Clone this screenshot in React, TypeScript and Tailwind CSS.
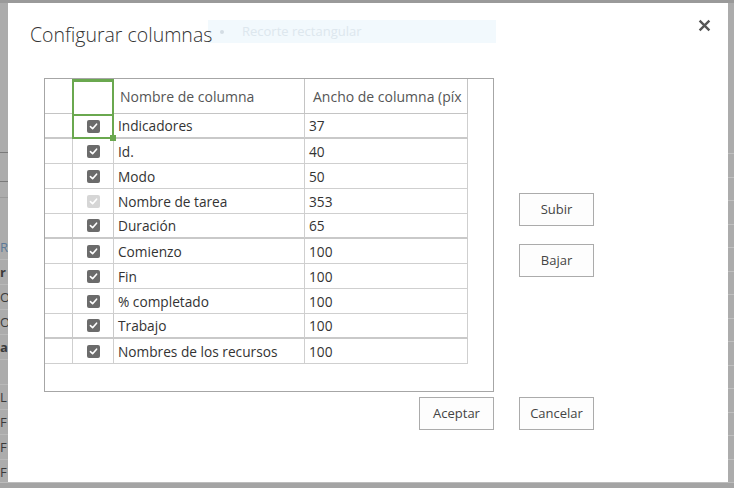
import React from "react";

type Row = { name: string; width: number; locked?: boolean; sep?: boolean };

const ROWS: Row[] = [
  { name: "Indicadores", width: 37, sep: true },
  { name: "Id.", width: 40 },
  { name: "Modo", width: 50 },
  { name: "Nombre de tarea", width: 353, locked: true },
  { name: "Duración", width: 65, sep: true },
  { name: "Comienzo", width: 100 },
  { name: "Fin", width: 100 },
  { name: "% completado", width: 100 },
  { name: "Trabajo", width: 100, sep: true },
  { name: "Nombres de los recursos", width: 100 },
];

const LEFT_STRIP = ["R", "r", "O", "O", "a", "", "L", "F", "F", "F"];

function Check({ locked }: { locked?: boolean }) {
  return (
    <span
      className={
        "flex h-[13px] w-[13px] items-center justify-center rounded-[2px] " +
        (locked ? "bg-[#d6d6d6]" : "bg-[#6b6b6b]")
      }
    >
      <svg width="9" height="9" viewBox="0 0 10 10" fill="none">
        <path d="M1.6 5.2 L4 7.5 L8.4 2.4" stroke="white" strokeWidth="1.8" strokeLinecap="round" strokeLinejoin="round" />
      </svg>
    </span>
  );
}

function Button({ label }: { label: string }) {
  return (
    <button className="flex h-[33px] w-[75px] items-center justify-center border border-[#ababab] bg-[#fdfdfd] text-[13px] text-[#444]">
      {label}
    </button>
  );
}

export default function App() {
  return (
    <div className="flex h-[488px] w-[734px] flex-col overflow-hidden bg-[#a9a9a9] font-['Open_Sans',sans-serif]">
      <div className="h-[3px] bg-[#9a9a9a]" />
      <div className="flex h-[479px]">
        {/* app behind the dialog, left edge */}
        <div className="flex w-[8px] flex-col overflow-hidden bg-[#acacac] text-[13px] leading-[24px] text-[#3a3a3a]">
          <div className="h-[150px] shrink-0 border-b border-[#7a7a7a]" />
          <div className="h-[29px] shrink-0 border-b border-[#7a7a7a]" />
          <div className="h-[16px] shrink-0 border-b border-[#9a9a9a]" />
          <div className="h-[37px] shrink-0" />
          {LEFT_STRIP.map((ch, i) => (
            <div
              key={i}
              className={"h-[25px] shrink-0 border-b border-[#b9b9b9] " + (ch === "r" || ch === "a" ? "font-bold" : "") + (ch === "R" ? " text-[#5d7a99]" : "")}
            >
              {ch}
            </div>
          ))}
        </div>

        {/* dialog */}
        <div className="relative flex w-[720px] flex-col bg-white">
          <h1 className="relative z-10 pl-[22px] pt-[18px] text-[19.5px] font-light leading-[28px] text-[#333]">Configurar columnas</h1>

          <button className="absolute right-[17px] top-[16px] text-[#555]">
            <svg width="13" height="13" viewBox="0 0 12 12">
              <path d="M1.5 1.5 L10.5 10.5 M10.5 1.5 L1.5 10.5" stroke="currentColor" strokeWidth="2.2" />
            </svg>
          </button>

          {/* snipping tool hint floating over the title */}
          <div className="absolute left-[200px] top-[17px] flex h-[23px] w-[288px] items-center bg-[#f2f9fd] text-[13px] text-[#dde7ee]">
            <span className="ml-[12px] mr-[18px] h-[4px] w-[4px] rounded-full bg-[#d4dde4]" />
            Recorte rectangular
          </div>

          <div className="flex pl-[36px] pt-[29px]">
            <div className="h-[314px] w-[450px] border border-[#a6a6a6]">
              <div className="grid grid-cols-[27px_42px_191px_163px] text-[13.7px] text-[#333]">
                {/* header */}
                <div className="h-[35px] border-b border-[#c4c4c4]" />
                <div className="relative h-[35px] border-x-2 border-t-[3px] border-[#6aa84f]" />
                <div className="flex h-[35px] items-center border-b border-r border-[#c4c4c4] pl-[6px] pt-[1px] text-[14px] text-[#555]">Nombre de columna</div>
                <div className="flex h-[35px] items-center overflow-hidden whitespace-nowrap border-b border-r border-[#c4c4c4] pl-[8px] pt-[1px] text-[14px] text-[#555]">
                  Ancho de columna (píx
                </div>

                {ROWS.map((row, i) => {
                  const line = row.sep ? "border-b-2 border-[#c9c9c9]" : "border-b border-[#cfcfcf]";
                  return (
                    <React.Fragment key={row.name}>
                      <div className={"h-[25px] " + line} />
                      {i === 0 ? (
                        <div className="relative flex h-[25px] items-center justify-center border-2 border-[#6aa84f]">
                          <Check />
                          <span className="absolute -bottom-[4px] -right-[4px] h-[6px] w-[6px] bg-[#6aa84f]" />
                        </div>
                      ) : (
                        <div className={"flex h-[25px] items-center justify-center border-x border-[#b4b4b4] " + line}>
                          <Check locked={row.locked} />
                        </div>
                      )}
                      <div className={"flex h-[25px] items-center pl-[4px] pt-[2px] " + line + " border-r border-r-[#cfcfcf]"}>{row.name}</div>
                      <div className={"flex h-[25px] items-center pl-[4px] pt-[2px] " + line + " border-r border-r-[#cfcfcf]"}>{row.width}</div>
                    </React.Fragment>
                  );
                })}
              </div>
            </div>

            <div className="ml-[25px] flex flex-col gap-[18px] pt-[115px]">
              <Button label="Subir" />
              <Button label="Bajar" />
            </div>
          </div>

          <div className="flex gap-[25px] pl-[411px] pt-[5px]">
            <Button label="Aceptar" />
            <Button label="Cancelar" />
          </div>
        </div>

        {/* app behind the dialog, right edge */}
        <div className="flex w-[6px] flex-col bg-[#acacac] pt-[150px]">
          {Array.from({ length: 14 }).map((_, i) => (
            <div key={i} className="h-[25px] border-t border-[#c0c0c0]" />
          ))}
        </div>
      </div>
      <div className="h-[6px] border-t border-[#bdbdbd] bg-[#a4a4a4]" />
    </div>
  );
}
